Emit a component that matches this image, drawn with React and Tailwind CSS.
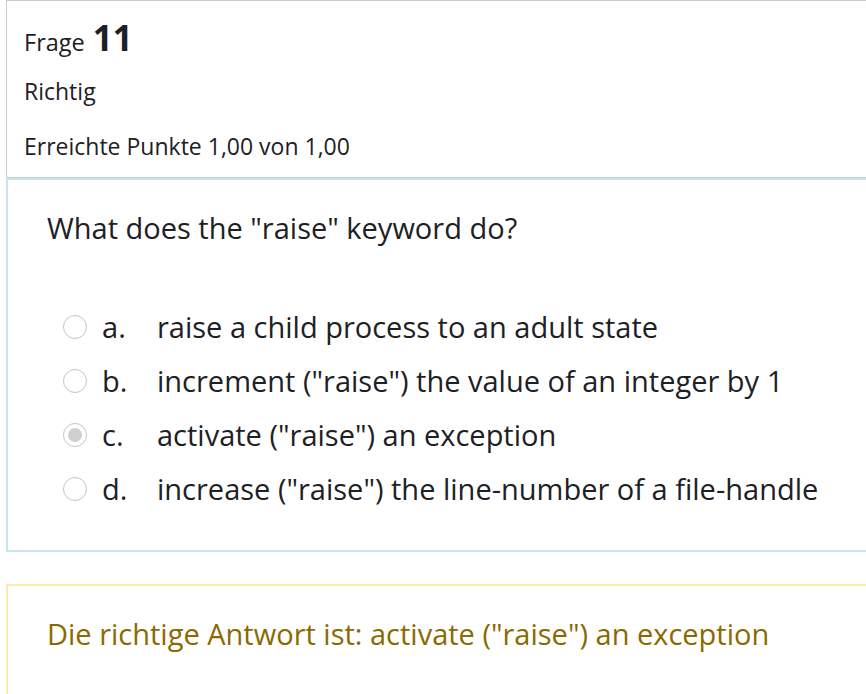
import { useState } from 'react';

const OPTIONS = [
  { key: 'a', text: 'raise a child process to an adult state' },
  { key: 'b', text: 'increment ("raise") the value of an integer by 1' },
  { key: 'c', text: 'activate ("raise") an exception' },
  { key: 'd', text: 'increase ("raise") the line-number of a file-handle' },
];

function Radio({ checked }) {
  return (
    <span className="w-[24px] h-[24px] rounded-full border border-[#c4c4c4] bg-white flex items-center justify-center shrink-0">
      {checked && <span className="w-[14px] h-[14px] rounded-full bg-[#cfcfcf]" />}
    </span>
  );
}

export default function App() {
  const [selected] = useState('c');

  return (
    <div className="min-h-screen bg-white pl-[6px] text-[#1d2125]" style={{ fontFamily: '"Open Sans", "Noto Sans", sans-serif' }}>
      {/* Info */}
      <div className="border border-r-0 border-[#c8ccd3] h-[178px] pl-[17px] pt-[19px]">
        <h3 className="flex items-baseline gap-[8px] leading-none">
          <span className="text-[23.5px]">Frage</span>
          <span className="text-[35px] font-bold">11</span>
        </h3>
        <p className="text-[23px] mt-[25px] leading-none">Richtig</p>
        <p className="text-[23px] mt-[32px] leading-none">Erreichte Punkte 1,00 von 1,00</p>
      </div>

      {/* Question */}
      <div className="border-2 border-r-0 border-[#c4e6ec] h-[374px] pl-[39px] pt-[30px]">
        <p className="text-[29px] leading-[36px]">What does the "raise" keyword do?</p>
        <div className="mt-[63px] flex flex-col gap-[18px] pl-[16px]">
          {OPTIONS.map((o) => (
            <div key={o.key} className="flex items-center h-[36px] text-[29px]">
              <Radio checked={selected === o.key} />
              <span className="w-[70px] pl-[15px]">{o.key}.</span>
              <span>{o.text}</span>
            </div>
          ))}
        </div>
      </div>

      {/* Outcome */}
      <div className="mt-[32px] border-2 border-r-0 border-b-0 border-[#fde9b2] h-[120px] pl-[39px] pt-[30px]">
        <p className="text-[29px] leading-[36px] text-[#8a6a00]">Die richtige Antwort ist: activate ("raise") an exception</p>
      </div>
    </div>
  );
}
